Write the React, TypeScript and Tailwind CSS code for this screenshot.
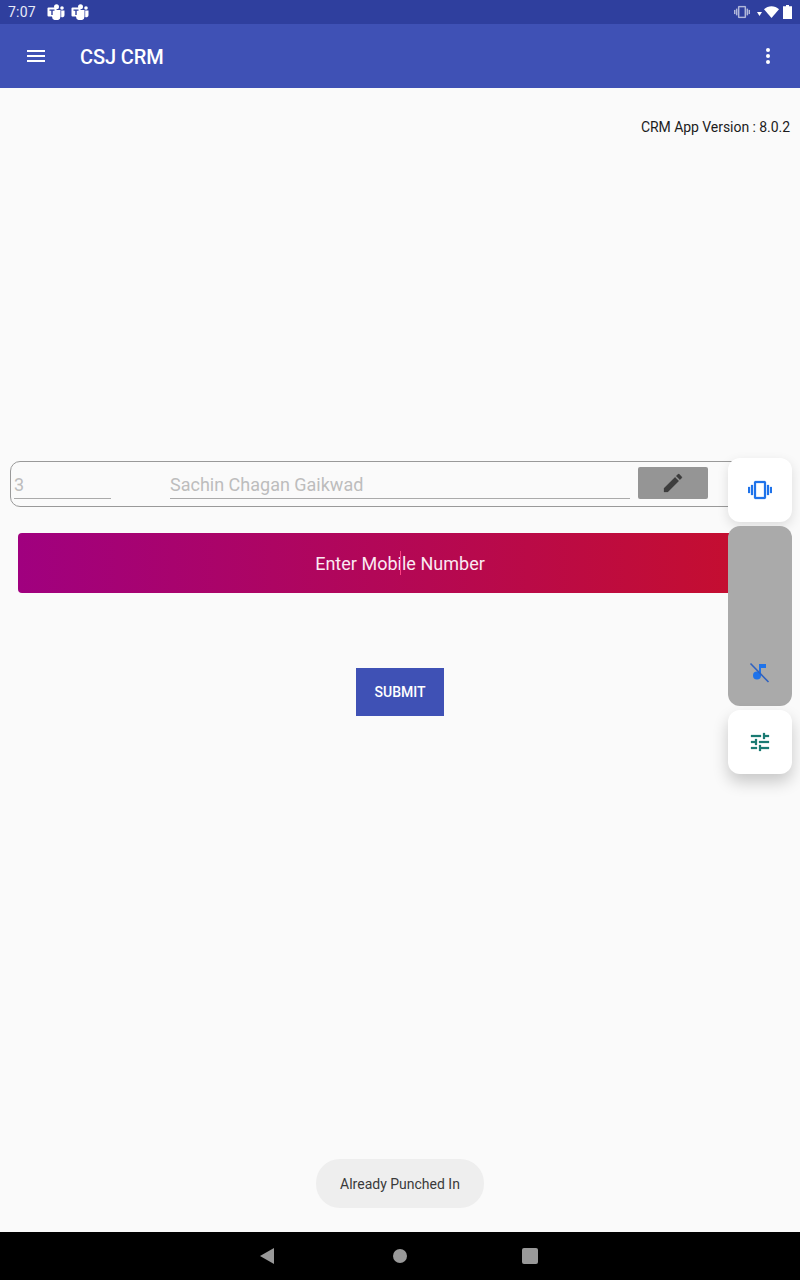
function TeamsIcon() {
  return (
    <svg width="18" height="16" viewBox="0 0 18 16" aria-hidden="true">
      <circle cx="9.5" cy="2.8" r="2.5" fill="#fff" />
      <circle cx="15" cy="4" r="1.8" fill="#fff" />
      <path d="M5 6h8.5v6.5a4 3.5 0 0 1-8.5 0z" fill="#fff" />
      <path d="M14.2 6.5H17.5v4.5a2.2 2.2 0 0 1-3.3 2z" fill="#fff" />
      <rect x="0.5" y="3.5" width="9" height="9" rx="1" fill="#fff" />
      <path d="M2.5 5.5h5v1.2H5.7v4.2H4.3V6.7H2.5z" fill="#2f3f9e" />
    </svg>
  )
}

function MaterialIcon({ d, size, className }: { d: string; size: number; className: string }) {
  return (
    <svg
      width={size}
      height={size}
      viewBox="0 0 24 24"
      fill="currentColor"
      stroke="currentColor"
      strokeWidth="0.25"
      className={className}
      aria-hidden="true"
    >
      <path d={d} />
    </svg>
  )
}

function MusicOffIcon() {
  return (
    <svg width="24" height="24" viewBox="0 0 24 24" className="text-[#1f73ea]" aria-hidden="true">
      <circle cx="9" cy="15.500" r="4" fill="currentColor" />
      <path d="M11 4h7v4h-5v7.500h-2z" fill="currentColor" />
      <path d="M2.500 3.500L20.500 22" stroke="#2f62c0" strokeWidth="1.600" />
    </svg>
  )
}

const VIBRATION =
  "M0 15h2V9H0v6zm3 2h2V7H3v10zm19-8v6h2V9h-2zm-3 8h2V7h-2v10zM16.5 3h-9C6.67 3 6 3.67 6 4.5v15c0 .83.67 1.5 1.5 1.5h9c.83 0 1.5-.67 1.5-1.5v-15c0-.83-.67-1.5-1.5-1.5zM16 19H8V5h8v14z"
const TUNE =
  "M3 17v2h6v-2H3zM3 5v2h10V5H3zm10 16v-2h8v-2h-8v-2h-2v6h2zM7 9v2H3v2h4v2h2V9H7zm14 4v-2H11v2h10zm-6-4h2V7h4V5h-4V3h-2v6z"
const EDIT =
  "M3 17.25V21h3.75L17.81 9.94l-3.75-3.75L3 17.25zM20.71 7.04c.39-.39.39-1.02 0-1.41l-2.34-2.34c-.39-.39-1.02-.39-1.41 0l-1.83 1.83 3.75 3.75 1.83-1.83z"

function StatusBar() {
  return (
    <div className="flex h-6 items-center bg-[#2f3f9e] pl-2 pr-2 text-white">
      <span className="w-[39px] text-sm leading-none tracking-[0.2px] text-[#e8eaf6]">7:07</span>
      <div className="flex gap-[6px]">
        <TeamsIcon />
        <TeamsIcon />
      </div>
      <div className="ml-auto flex items-center">
        <MaterialIcon d={VIBRATION} size={16} className="mr-[7px] text-[#b3b9dc]" />
        <svg width="5" height="4" viewBox="0 0 5 4" className="mr-[2px] mt-[3px]" aria-hidden="true">
          <path d="M0 0h5L2.5 4z" fill="#fff" />
        </svg>
        <svg width="15" height="12" viewBox="0 0 15 12" className="mr-[4px]" aria-hidden="true">
          <path d="M0 3.2C4.2-.9 10.800-.9 15 3.2L7.500 12z" fill="#fff" />
        </svg>
        <svg width="9" height="14" viewBox="0 0 9 14" aria-hidden="true">
          <path d="M3 0h3v1.200h3V14H0V1.200h3z" fill="#fff" />
        </svg>
      </div>
    </div>
  )
}

function AppBar() {
  return (
    <div className="flex h-16 items-center bg-[#3f51b5] text-white">
      <div className="ml-[27px] flex w-[18px] flex-col gap-[3px]">
        <div className="h-[2px] bg-white" />
        <div className="h-[2px] bg-white" />
        <div className="h-[2px] bg-white" />
      </div>
      <h1 className="ml-[35px] pt-[2px] text-xl font-medium tracking-[-0.1px]">CSJ CRM</h1>
      <div className="ml-auto mr-[30px] flex flex-col gap-[2px]">
        <div className="size-[4px] rounded-full bg-white" />
        <div className="size-[4px] rounded-full bg-white" />
        <div className="size-[4px] rounded-full bg-white" />
      </div>
    </div>
  )
}

function FloatingPanel() {
  return (
    <div className="absolute right-2 top-[370px] flex w-16 flex-col gap-[4px]">
      <div className="flex h-16 items-center justify-center rounded-xl bg-white shadow-[0_4px_12px_rgba(0,0,0,0.12)]">
        <MaterialIcon d={VIBRATION} size={24} className="text-[#1f73ea]" />
      </div>
      <div className="flex h-[180px] items-end justify-center rounded-xl bg-[#aaaaaa] pb-[22px]">
        <MusicOffIcon />
      </div>
      <div className="flex h-16 items-center justify-center rounded-xl bg-white shadow-[0_8px_16px_rgba(0,0,0,0.2)]">
        <MaterialIcon d={TUNE} size={24} className="text-[#1a7a72]" />
      </div>
    </div>
  )
}

export default function App() {
  return (
    <div className="flex h-[1280px] w-[800px] flex-col font-['Roboto',sans-serif]">
      <StatusBar />
      <AppBar />

      <main className="relative flex-1 bg-[#fafafa]">
        <p className="mt-[30px] pr-[10px] text-right text-sm leading-[18px] tracking-[-0.05px] text-[#1c1c1c]">CRM App Version : 8.0.2</p>

        <div className="ml-[10px] mr-[10px] mt-[325px] flex h-[46px] items-start rounded-[10px] border border-[#999999] pl-[3px]">
          <div className="mt-[11px] h-[26px] w-[97px] border-b border-[#aaaaaa] text-lg leading-[24px] text-[#bdbdbd]">3</div>
          <div className="ml-[59px] mt-[11px] h-[26px] w-[460px] border-b border-[#aaaaaa] text-lg leading-[24px] text-[#bdbdbd]">
            Sachin Chagan Gaikwad
          </div>
          <button className="ml-2 mt-[5px] flex h-[32px] w-[70px] items-center justify-center rounded-[2px] bg-[#959595]">
            <MaterialIcon d={EDIT} size={24} className="text-[#3d3d3d]" />
          </button>
        </div>

        <div className="relative ml-[18px] mr-[18px] mt-[26px] flex h-[60px] items-center justify-center rounded-[4px] bg-linear-to-r/srgb from-[#a0007f] to-[#c70f2b]">
          <span className="pt-[2px] text-lg tracking-[0.02px] text-[#fbe9f2]">Enter Mobile Number</span>
          <div className="absolute left-[382px] top-[18px] h-[24px] w-[1px] bg-[#ff4081]" />
        </div>

        <button className="mx-auto mt-[75px] block h-12 w-[88px] bg-[#3f51b5] text-sm font-medium tracking-[-0.02px] text-white">SUBMIT</button>

        <FloatingPanel />

        <div className="absolute bottom-6 left-[316px] flex h-[49px] w-[168px] items-center justify-center rounded-[24px] bg-[#eeeeee] text-sm text-[#3a3a3a]">
          Already Punched In
        </div>
      </main>

      <nav className="flex h-12 items-center bg-black pl-[260px]">
        <svg width="14" height="16" viewBox="0 0 14 16" aria-hidden="true">
          <path d="M14 0v16L0 8z" fill="#999999" />
        </svg>
        <div className="ml-[119px] size-[14px] rounded-full bg-[#999999]" />
        <div className="ml-[115px] size-[16px] rounded-[2px] bg-[#999999]" />
      </nav>
    </div>
  )
}
